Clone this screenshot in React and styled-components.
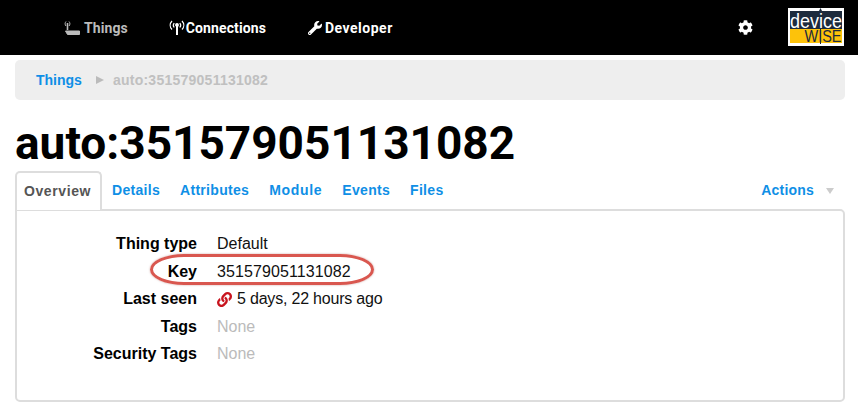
import React from "react"
import styled, { createGlobalStyle } from "styled-components"
import { FaCog, FaLink, FaWrench } from "react-icons/fa"

const GlobalStyle = createGlobalStyle`
    html, body {
        margin: 0;
        padding: 0;
        background: #fff;
        overflow: hidden;
    }
    body {
        font-family: "Liberation Sans", Arial, sans-serif;
    }
`
const Page = styled.div`
    width: 858px;
    height: 411px;
    overflow: hidden;
`
const NavBar = styled.header`
    height: 55px;
    background: #000;
    display: flex;
    align-items: center;
    padding-left: 64px;
`
const NavItem = styled.a`
    display: flex;
    align-items: center;
    gap: ${props => props.$gap || 3}px;
    margin-right: ${props => props.$after || 0}px;
    font-family: "Roboto", sans-serif;
    font-weight: 700;
    font-size: 14px;
    letter-spacing: ${props => props.$spacing || 0.2}px;
    color: ${props => props.$muted ? "#bbb" : "#fff"};
`
const NavSpacer = styled.div`
    flex: 1;
`
const SettingsIcon = styled(FaCog)`
    color: #fff;
    font-size: 15px;
    margin-right: 35px;
`
const Logo = styled.svg`
    display: block;
    width: 56px;
    height: 38px;
    margin: 0 14px 1px 0;
    overflow: visible;
`
const Breadcrumb = styled.nav`
    margin: 5px 13px 0 15px;
    height: 40px;
    background: #eee;
    border-radius: 5px;
    display: flex;
    align-items: center;
    padding-left: 21px;
    font-size: 14px;
    font-weight: 700;
`
const CrumbLink = styled.a`
    color: #0f8fe6;
`
const CrumbArrow = styled.span`
    width: 0;
    height: 0;
    margin: 0 9px 0 14px;
    border-left: 8px solid #bbb;
    border-top: 4.5px solid transparent;
    border-bottom: 4.5px solid transparent;
`
const CrumbCurrent = styled.span`
    color: #c0c0c0;
    letter-spacing: 0.25px;
`
const Title = styled.h1`
    margin: 16px 0 0 15px;
    height: 55px;
    font-family: "Roboto", sans-serif;
    font-weight: 700;
    font-size: 46px;
    line-height: 55px;
    color: #000;
`
const TabBar = styled.div`
    margin: 0 13px 0 15px;
    height: 38px;
    display: flex;
    align-items: flex-end;
    gap: 20px;
    font-size: 14px;
    font-weight: 700;
    letter-spacing: 0.3px;
`
const ActiveTab = styled.div`
    box-sizing: border-box;
    width: 87px;
    height: 39px;
    margin: 0 -10px -1px 0;
    padding: 10px 2px 0 0;
    text-align: center;
    position: relative;
    z-index: 1;
    background: #fff;
    color: #555;
    letter-spacing: 0.6px;
    border: 2px solid #ddd;
    border-bottom: none;
    border-radius: 5px 5px 0 0;
`
const Tab = styled.a`
    color: #0f8fe6;
    height: 27px;
    letter-spacing: ${props => props.$spacing || 0.3}px;
`
const TabActions = styled.a`
    margin-left: auto;
    height: 27px;
    margin-right: 11px;
    display: flex;
    gap: 12px;
    color: #0f8fe6;
    letter-spacing: 0.2px;
`
const Caret = styled.span`
    width: 0;
    height: 0;
    margin-top: 6px;
    border-top: 6px solid #ccc;
    border-left: 4px solid transparent;
    border-right: 4px solid transparent;
`
const Panel = styled.section`
    box-sizing: border-box;
    margin: 0 13px 0 15px;
    height: 193px;
    border: 2px solid #ddd;
    border-radius: 0 5px 5px 5px;
    padding-top: 20px;
    display: grid;
    grid-template-columns: 180px 1fr;
    grid-auto-rows: 27.5px;
    column-gap: 20px;
    font-size: 16px;
    line-height: 26px;
`
const Label = styled.div`
    font-weight: 700;
    color: #000;
    text-align: right;
`
const Value = styled.div`
    display: flex;
    align-items: center;
    gap: 5px;
    height: 26px;
    color: ${props => props.$empty ? "#bbb" : "#111"};
    letter-spacing: ${props => props.$spacing || 0}px;
`
const LinkIcon = styled(FaLink)`
    color: #c8141e;
    font-size: 15px;
`
const KeyRow = styled.div`
    position: relative;
    grid-column: 1 / -1;
    display: grid;
    grid-template-columns: 180px 1fr;
    column-gap: 20px;
`
const KeyMark = styled.div`
    position: absolute;
    box-sizing: border-box;
    left: 133px;
    top: -5px;
    width: 224px;
    height: 31px;
    border: 3px solid #d9574f;
    border-radius: 34px / 50%;
    box-shadow: 0 0 2px rgba(150, 60, 50, 0.5);
`

function AntennaIcon() {
    return (
        <svg width="17" height="16" viewBox="0 0 17 16" fill="none" stroke="currentColor">
            <path d="M2 1.500C.8 3 .8 4.500 2 6M5 1.500C6.200 3 6.200 4.500 5 6" strokeWidth="1" />
            <path d="M3.500 3v7" strokeWidth="1.600" />
            <path d="M1.500 11h14v3.500h-12z" fill="currentColor" strokeWidth="1" />
        </svg>
    )
}

function SignalIcon() {
    return (
        <svg width="16" height="16" viewBox="0 0 16 16" fill="none" stroke="currentColor" strokeWidth="1.200">
            <path d="M3 1C.600 3.500.600 7 3 9.500M13 1c2.400 2.500 2.400 6 0 8.500" />
            <path d="M5.200 3c-1.200 1.500-1.200 3 0 4.500M10.800 3c1.200 1.500 1.200 3 0 4.500" />
            <path d="M8 5v10" strokeWidth="2" />
            <circle cx="8" cy="5" r="1.300" fill="currentColor" />
        </svg>
    )
}

function DeviceWiseLogo() {
    return (
        <Logo viewBox="0 0 56 38">
            <rect width="56" height="38" fill="#fff" />
            <rect x="2" y="3" width="52" height="18" fill="#1d2b3d" />
            <rect x="2" y="21" width="52" height="14" fill="#fdc20a" />
            <text x="28" y="20" textAnchor="middle" fontFamily="Liberation Sans" fontSize="21" textLength="52" lengthAdjust="spacingAndGlyphs" fill="#fff">device</text>
            <text x="35" y="34" textAnchor="middle" fontFamily="Liberation Sans" fontSize="16" textLength="37" lengthAdjust="spacingAndGlyphs" fill="#1d2b3d">WISE</text>
            <path d="M32.500 21v15" stroke="#1d2b3d" strokeWidth="1" />
            <path d="M32.500 0l-2 4h4z" fill="#1d2b3d" />
        </Logo>
    )
}

export default function App() {
    return (
        <Page>
            <GlobalStyle />
            <NavBar>
                <NavItem $muted $after={41} $spacing={0.1}><AntennaIcon />Things</NavItem>
                <NavItem $gap={1} $after={42} $spacing={0.1}><SignalIcon />Connections</NavItem>
                <NavItem $gap={3} $spacing={0.5}><FaWrench size={14} />Developer</NavItem>
                <NavSpacer />
                <SettingsIcon />
                <DeviceWiseLogo />
            </NavBar>
            <Breadcrumb>
                <CrumbLink>Things</CrumbLink>
                <CrumbArrow />
                <CrumbCurrent>auto:351579051131082</CrumbCurrent>
            </Breadcrumb>
            <Title>auto:351579051131082</Title>
            <TabBar>
                <ActiveTab>Overview</ActiveTab>
                <Tab>Details</Tab>
                <Tab>Attributes</Tab>
                <Tab $spacing={0.7}>Module</Tab>
                <Tab>Events</Tab>
                <Tab>Files</Tab>
                <TabActions>Actions<Caret /></TabActions>
            </TabBar>
            <Panel>
                <Label>Thing type</Label>
                <Value>Default</Value>
                <KeyRow>
                    <KeyMark />
                    <Label>Key</Label>
                    <Value $spacing={0.1}>351579051131082</Value>
                </KeyRow>
                <Label>Last seen</Label>
                <Value $spacing={-0.2}><LinkIcon />5 days, 22 hours ago</Value>
                <Label>Tags</Label>
                <Value $empty>None</Value>
                <Label>Security Tags</Label>
                <Value $empty>None</Value>
            </Panel>
        </Page>
    )
}
